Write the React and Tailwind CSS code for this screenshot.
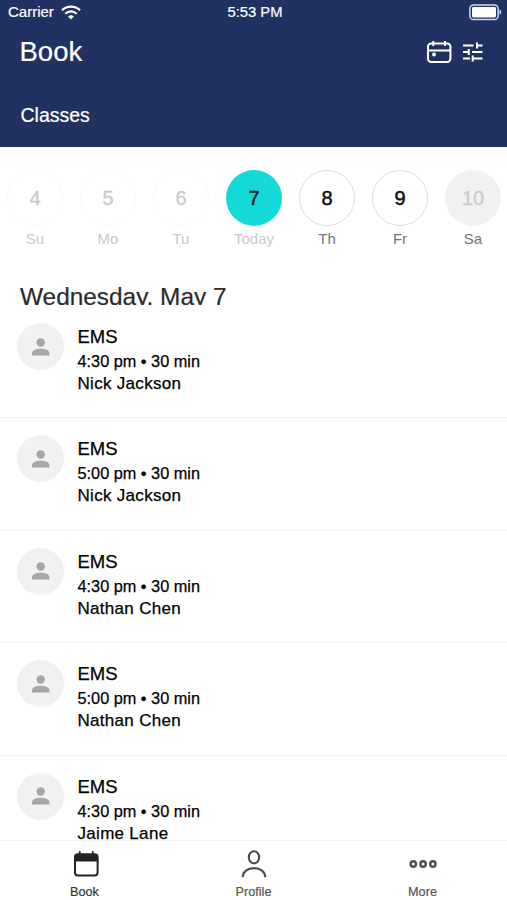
import React, { useState } from 'react';

const days = [
  { date: 4, label: 'Su', status: 'past' },
  { date: 5, label: 'Mo', status: 'past' },
  { date: 6, label: 'Tu', status: 'past' },
  { date: 7, label: 'Today', status: 'today' },
  { date: 8, label: 'Th', status: 'open' },
  { date: 9, label: 'Fr', status: 'open' },
  { date: 10, label: 'Sa', status: 'closed' },
];

const classes = [
  { id: 1, name: 'EMS', time: '4:30 pm', duration: '30 min', trainer: 'Nick Jackson' },
  { id: 2, name: 'EMS', time: '5:00 pm', duration: '30 min', trainer: 'Nick Jackson' },
  { id: 3, name: 'EMS', time: '4:30 pm', duration: '30 min', trainer: 'Nathan Chen' },
  { id: 4, name: 'EMS', time: '5:00 pm', duration: '30 min', trainer: 'Nathan Chen' },
  { id: 5, name: 'EMS', time: '4:30 pm', duration: '30 min', trainer: 'Jaime Lane' },
];

const circleStyles = {
  past: 'border border-[#fafafa] text-[#c9c9c9] [-webkit-text-stroke:0.3px]',
  today: 'bg-[#14d9d9] text-[#10181c] [-webkit-text-stroke:0.5px]',
  open: 'border border-[#dedbdf] text-[#111] [-webkit-text-stroke:0.5px]',
  closed: 'bg-[#f1f1f1] text-[#cbcbcb] [-webkit-text-stroke:0.3px]',
};

const labelStyles = {
  past: 'text-[#c9c9c9]',
  today: 'text-[#c9c9c9]',
  open: 'text-[#757575]',
  closed: 'text-[#757575]',
};

const WifiIcon = () => (
  <svg width="20" height="15" viewBox="0 0 20 15" fill="none" stroke="#fff" strokeWidth="2.2">
    <path d="M1 5.2C6 .4 14 .4 19 5.2" />
    <path d="M4.3 8.7c3.3-3.1 8.1-3.1 11.4 0" />
    <path d="M10 14.4 7 11.4c1.8-1.6 4.2-1.6 6 0z" fill="#fff" stroke="none" />
  </svg>
);

const BatteryIcon = () => (
  <svg width="33" height="17" viewBox="0 0 33 17" fill="none">
    <rect x="0.9" y="0.9" width="28.2" height="14.6" rx="3.6" stroke="#d3daf0" strokeWidth="1.5" />
    <rect x="3" y="3" width="24" height="10.4" rx="1.4" fill="#fff" />
    <path d="M30.5 5.5c2.2.8 2.2 4.6 0 5.4z" fill="#d3daf0" />
  </svg>
);

const CalendarIcon = () => (
  <svg width="26" height="24" viewBox="0 0 26 24" fill="none" stroke="#fff" strokeWidth="2">
    <rect x="2" y="3.4" width="22.4" height="18.6" rx="3.2" />
    <path d="M2 10.4h22.4M7.3 1v5M19 1v5" />
    <circle cx="8" cy="14.5" r="2" fill="#fff" stroke="none" />
  </svg>
);

const FilterIcon = () => (
  <svg width="20" height="20" viewBox="0 0 20 20" fill="none" stroke="#fff" strokeWidth="2">
    <path d="M0 3.5h10.5M14 3.5h5.5M14 .5v6" />
    <path d="M0 10h5.5M9 10h10.5M5.8 7v6" />
    <path d="M0 16.5h7M10 16.5h9.5M9.7 13.5v6" />
  </svg>
);

const PersonIcon = () => (
  <svg width="18" height="18" viewBox="0 0 18 18" fill="#a6a6a6">
    <circle cx="8.7" cy="4.5" r="4.2" />
    <path d="M0 17.4v-1.6C0 12.2 4.1 10.8 8.7 10.8s8.8 1.4 8.8 5v1.6z" />
  </svg>
);

const BookTabIcon = () => (
  <svg width="26" height="26" viewBox="0 0 26 26" fill="none">
    <rect x="2" y="3.2" width="22.6" height="21.4" rx="3" stroke="#242428" strokeWidth="2" />
    <path d="M1.5 10.6V5.5c0-1.5 1-2.5 2.5-2.5h18.6c1.5 0 2.5 1 2.5 2.5v5.1z" fill="#242428" />
    <path d="M6.8 1v3M19.8 1v3" stroke="#242428" strokeWidth="1.8" strokeLinecap="round" />
  </svg>
);

const ProfileTabIcon = () => (
  <svg width="26" height="28" viewBox="0 0 26 28" fill="none" stroke="#4d4d4d" strokeWidth="2.1">
    <ellipse cx="13" cy="7.3" rx="5.2" ry="6.1" />
    <path d="M1.6 27.2c.4-5.4 4.8-9.1 11.4-9.1s11 3.7 11.4 9.1" />
  </svg>
);

const MoreTabIcon = () => (
  <svg width="28" height="10" viewBox="0 0 28 10" fill="none" stroke="#505050" strokeWidth="2.4">
    <circle cx="4.3" cy="5" r="2.7" />
    <circle cx="14.1" cy="5" r="2.7" />
    <circle cx="23.9" cy="5" r="2.7" />
  </svg>
);

const tabs = [
  { name: 'Book', Icon: BookTabIcon },
  { name: 'Profile', Icon: ProfileTabIcon },
  { name: 'More', Icon: MoreTabIcon },
];

const ClassRow = ({ item }) => (
  <div className="flex h-[112.4px] shrink-0 items-start border-b border-[#f4f4f4] pl-[17px] pt-[17px]">
    <div className="flex h-[47px] w-[47px] items-center justify-center rounded-full bg-[#f1f1f1]">
      <PersonIcon />
    </div>
    <div className="ml-[13.5px] text-black [-webkit-text-stroke:0.25px]">
      <div className="mt-[2px] h-[24px] text-[18.5px] leading-[24px]">{item.name}</div>
      <div className="h-[23px] text-[16.3px] leading-[24px]">
        {item.time} • {item.duration}
      </div>
      <div className="h-[23px] text-[17px] leading-[23px] tracking-[0.3px]">{item.trainer}</div>
    </div>
  </div>
);

const App = () => {
  const [activeTab, setActiveTab] = useState('Book');

  return (
    <div className="flex h-[900px] w-[507px] flex-col overflow-hidden bg-white font-['Liberation_Sans',Arial,sans-serif]">
      <header className="h-[147px] shrink-0 bg-[#203162] text-white [-webkit-text-stroke:0.2px]">
        <div className="grid h-[25px] grid-cols-3 items-center pl-[8px] pr-[5px]">
          <div className="flex items-center gap-[7px] text-[15px]">
            <span>Carrier</span>
            <WifiIcon />
          </div>
          <div className="text-center text-[14.8px]">5:53 PM</div>
          <div className="flex justify-end">
            <BatteryIcon />
          </div>
        </div>
        <div className="flex h-[54px] items-center justify-between pl-[19.5px] pr-[24px]">
          <h1 className="text-[27.5px] leading-[32px]">Book</h1>
          <div className="flex items-center gap-[11px]">
            <CalendarIcon />
            <FilterIcon />
          </div>
        </div>
        <div className="mt-[23px] pl-[20.5px] text-[19.5px] leading-[26px]">Classes</div>
      </header>

      <div className="-ml-[1.5px] grid w-[511px] shrink-0 grid-cols-7 pt-[23px]">
        {days.map(day => (
          <div key={day.date} className="flex flex-col items-center">
            <div className={`flex h-[56px] w-[56px] items-center justify-center rounded-full text-[20px] ${circleStyles[day.status]}`}>
              {day.date}
            </div>
            <div className={`mt-[3px] text-[15px] leading-[20px] ${labelStyles[day.status]}`}>{day.label}</div>
          </div>
        ))}
      </div>

      {/* header height trims the text at its baseline */}
      <h2 className="mt-[34px] h-[21.5px] shrink-0 overflow-hidden pl-[20px] text-[24.4px] leading-[28px] text-[#2b2b2b] [-webkit-text-stroke:0.2px]">
        Wednesday, May 7
      </h2>

      <main className="mt-[1.5px] flex min-h-0 flex-1 flex-col overflow-hidden">
        {classes.map(item => (
          <ClassRow key={item.id} item={item} />
        ))}
      </main>

      <nav className="grid h-[60px] shrink-0 grid-cols-3 border-t border-[#f5f5f5] bg-white">
        {tabs.map(({ name, Icon }) => (
          <button
            key={name}
            onClick={() => setActiveTab(name)}
            className={`flex flex-col items-center pt-[8px] text-[12.7px] leading-[16px] [-webkit-text-stroke:0.2px] ${
              activeTab === name ? 'text-[#333]' : 'text-[#555]'
            }`}
          >
            <span className={`flex h-[30px] items-center ${name === 'Book' ? 'pl-[2px]' : ''}`}>
              <Icon />
            </span>
            <span className="mt-[5px]">{name}</span>
          </button>
        ))}
      </nav>
    </div>
  );
};

export default App;
